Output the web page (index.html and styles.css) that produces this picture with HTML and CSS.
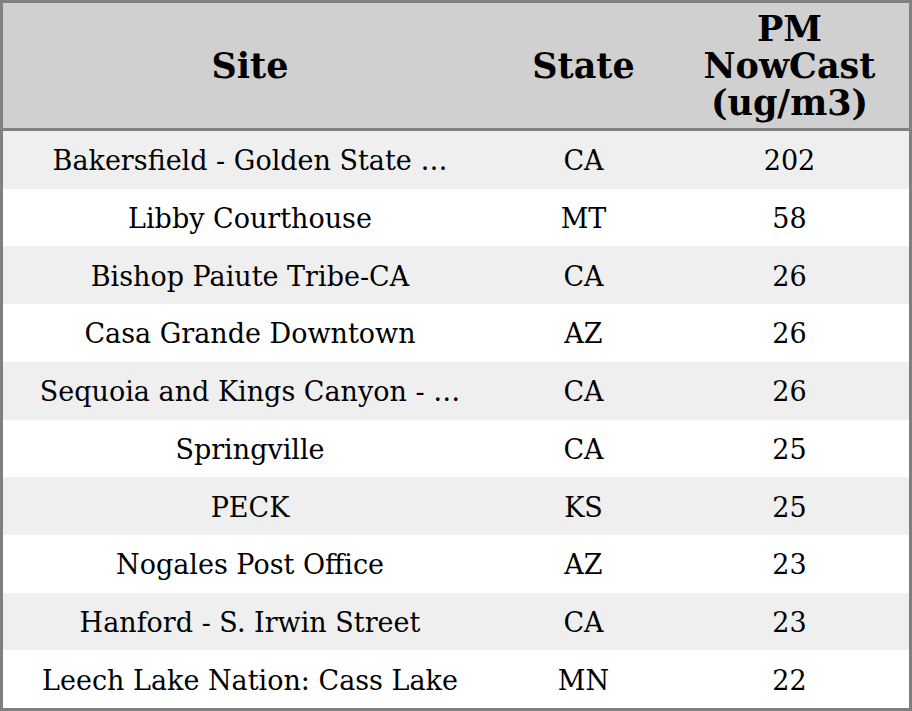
FILE: index.html
```html
<!DOCTYPE html>
<html>
<head>
<meta charset="utf-8">
<link rel="stylesheet" href="styles.css">
</head>
<body>
<div class="table">
  <div class="row head">
    <div class="cell site">Site</div>
    <div class="cell state">State</div>
    <div class="cell pm">PM<br>NowCast<br>(ug/m3)</div>
  </div>
  <div class="row odd"><div class="cell site">Bakersfield - Golden State …</div><div class="cell state">CA</div><div class="cell pm">202</div></div>
  <div class="row"><div class="cell site">Libby Courthouse</div><div class="cell state">MT</div><div class="cell pm">58</div></div>
  <div class="row odd"><div class="cell site">Bishop Paiute Tribe-CA</div><div class="cell state">CA</div><div class="cell pm">26</div></div>
  <div class="row"><div class="cell site">Casa Grande Downtown</div><div class="cell state">AZ</div><div class="cell pm">26</div></div>
  <div class="row odd"><div class="cell site">Sequoia and Kings Canyon - …</div><div class="cell state">CA</div><div class="cell pm">26</div></div>
  <div class="row"><div class="cell site">Springville</div><div class="cell state">CA</div><div class="cell pm">25</div></div>
  <div class="row odd"><div class="cell site">PECK</div><div class="cell state">KS</div><div class="cell pm">25</div></div>
  <div class="row"><div class="cell site">Nogales Post Office</div><div class="cell state">AZ</div><div class="cell pm">23</div></div>
  <div class="row odd"><div class="cell site">Hanford - S. Irwin Street</div><div class="cell state">CA</div><div class="cell pm">23</div></div>
  <div class="row"><div class="cell site">Leech Lake Nation: Cass Lake</div><div class="cell state">MN</div><div class="cell pm">22</div></div>
</div>
</body>
</html>
```
FILE: styles.css
```css
html, body {
  margin: 0;
  padding: 0;
  background: #fff;
}
.table {
  width: 912px;
  height: 711px;
  box-sizing: border-box;
  border: 3px solid #808080;
  display: flex;
  flex-direction: column;
  font-family: "DejaVu Serif", serif;
  color: #000;
}
.row {
  display: flex;
  flex: 1 1 0;
  align-items: center;
  background: #fff;
}
.row.odd {
  background: #efefef;
}
.row.head {
  flex: 0 0 125px;
  background: #d0d0d0;
  border-bottom: 3px solid #808080;
  font-weight: bold;
  line-height: 37px;
}
.cell {
  text-align: center;
  font-size: 27px;
  padding-top: 2px;
}
.head .cell {
  font-size: 35px;
  padding-top: 0;
}
.site { width: 494px; }
.state { width: 173px; }
.pm { width: 239px; }
```
